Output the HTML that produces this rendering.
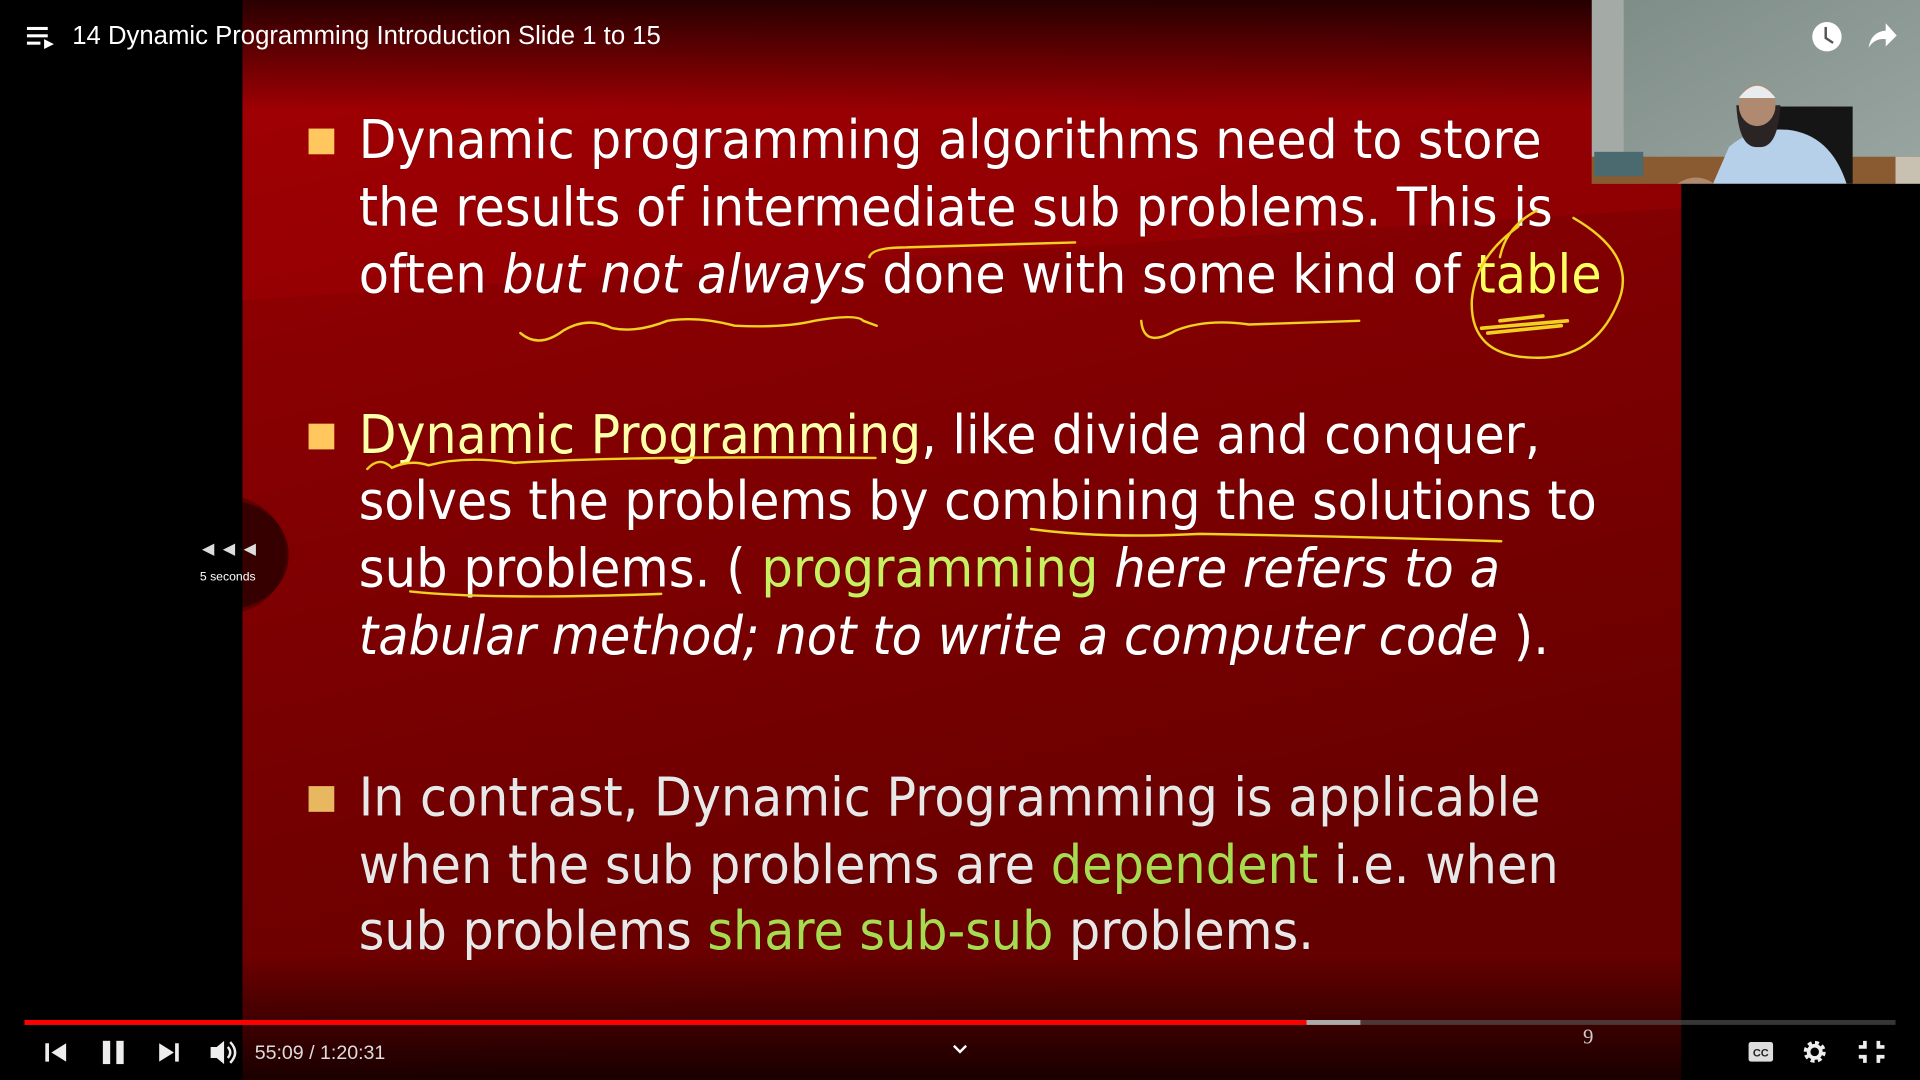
<!DOCTYPE html>
<html><head><meta charset="utf-8"><style>
html,body{margin:0;padding:0;background:#000;overflow:hidden}
svg{display:block}
text{font-family:"DejaVu Sans","Liberation Sans",sans-serif}
</style></head><body>
<svg width="1920" height="1080" viewBox="0 0 1568 882" preserveAspectRatio="none" xmlns="http://www.w3.org/2000/svg">
<defs>
<linearGradient id="slide" x1="0" y1="0" x2="0.3" y2="1">
<stop offset="0" stop-color="#a00004"/><stop offset="0.3" stop-color="#8a0002"/><stop offset="1" stop-color="#640000"/>
</linearGradient>
<linearGradient id="top" x1="0" y1="0" x2="0" y2="1">
<stop offset="0" stop-color="#000" stop-opacity="0.75"/><stop offset="1" stop-color="#000" stop-opacity="0"/>
</linearGradient>
<linearGradient id="bot" x1="0" y1="0" x2="0" y2="1">
<stop offset="0" stop-color="#000" stop-opacity="0"/><stop offset="1" stop-color="#000" stop-opacity="0.75"/>
</linearGradient>
<linearGradient id="wall" x1="0" y1="0" x2="1" y2="1">
<stop offset="0" stop-color="#7e8c88"/><stop offset="1" stop-color="#9aa6a2"/>
</linearGradient>
</defs>
<rect width="1568" height="882" fill="#000"/>
<rect x="198" y="0" width="1175" height="882" fill="url(#slide)"/>
<path d="M198 0 H1300 V150 L1373 150 V170 L198 245 Z" fill="#a80006" opacity="0.35"/>
<rect x="0" y="0" width="1568" height="90" fill="url(#top)"/>
<rect x="0" y="780" width="1568" height="102" fill="url(#bot)"/>
<!-- webcam -->
<rect x="1300" y="0" width="268" height="150" fill="url(#wall)"/>
<rect x="1300" y="0" width="26" height="128" fill="#a4aaa6"/>
<rect x="1300" y="128" width="268" height="22" fill="#8a5a30"/>
<rect x="1302" y="124" width="40" height="20" fill="#4a6a70"/>
<rect x="1548" y="128" width="20" height="22" fill="#c8c0b0"/>
<rect x="1437" y="87" width="76" height="63" fill="#151515"/>
<path d="M1399 150 L1412 120 Q1430 104 1460 106 Q1495 110 1508 150 Z" fill="#b6d0ea"/>
<path d="M1418 86 Q1420 122 1436 120 Q1452 122 1454 86 Z" fill="#2a2424"/>
<ellipse cx="1435" cy="86" rx="15" ry="17" fill="#b08a70"/>
<path d="M1420 80 Q1435 60 1450 80 Z" fill="#e8ecef"/>
<path d="M1370 150 Q1385 140 1400 150 Z" fill="#b08a70"/>
<!-- header -->
<g fill="#fff"><rect x="22" y="22" width="17" height="2.5"/><rect x="22" y="28" width="17" height="2.5"/><rect x="22" y="34" width="11" height="2.5"/><path d="M36 32 L44 36 L36 40 Z"/></g>
<text x="59" y="36" font-size="21" fill="#fff" style="font-family:'Liberation Sans',sans-serif">14 Dynamic Programming Introduction Slide 1 to 15</text>
<circle cx="1492" cy="30" r="12" fill="#fff"/><path d="M1491 22 V31 L1497 35" stroke="#555" stroke-width="2" fill="none"/>
<path d="M1526 39 Q1528 26 1540 25 V19 L1549 29 L1540 38 V32 Q1531 31 1526 39 Z" fill="#fff"/>
<!-- bullets -->
<g fill="#ffc75e"><rect x="252" y="105" width="21" height="21"/><rect x="252" y="346" width="21" height="21"/><rect x="252" y="642" width="21" height="21" fill="#e8b860"/></g>
<g font-size="44" fill="#fff" style="paint-order:stroke" stroke="#3a0000" stroke-opacity="0.35" stroke-width="1">
<text x="293" y="129" textLength="966" lengthAdjust="spacingAndGlyphs">Dynamic programming algorithms need to store</text>
<text x="293" y="184" textLength="975" lengthAdjust="spacingAndGlyphs">the results of intermediate sub problems. This is</text>
<text x="293" y="239" textLength="1015" lengthAdjust="spacingAndGlyphs">often <tspan font-style="italic">but not always</tspan> done with some kind of <tspan fill="#ffff60">table</tspan></text>
<text x="293" y="370" textLength="965" lengthAdjust="spacingAndGlyphs"><tspan fill="#ffffa8">Dynamic Programming</tspan>, like divide and conquer,</text>
<text x="293" y="424" textLength="1011" lengthAdjust="spacingAndGlyphs">solves the problems by combining the solutions to</text>
<text x="293" y="479" textLength="932" lengthAdjust="spacingAndGlyphs">sub problems. ( <tspan fill="#c8f060">programming</tspan> <tspan font-style="italic">here refers to a</tspan></text>
<text x="293" y="534" textLength="972" lengthAdjust="spacingAndGlyphs"><tspan font-style="italic">tabular method; not to write a computer code</tspan> ).</text>
<g fill="#e8e8e8">
<text x="293" y="666" textLength="965" lengthAdjust="spacingAndGlyphs">In contrast, Dynamic Programming is applicable</text>
<text x="293" y="721" textLength="980" lengthAdjust="spacingAndGlyphs">when the sub problems are <tspan fill="#a8dc50">dependent</tspan> i.e. when</text>
<text x="293" y="775" textLength="780" lengthAdjust="spacingAndGlyphs">sub problems <tspan fill="#a8dc50">share sub-sub</tspan> problems.</text>
</g></g>
<!-- annotations -->
<g fill="none" stroke="#f0d020" stroke-width="2" stroke-linecap="round">
<path d="M425 272 Q440 285 460 270 Q480 258 500 268 Q520 272 545 262 Q570 258 600 266 Q640 268 665 262 Q700 256 705 262 L716 266"/>
<path d="M710 210 Q712 202 740 202 L878 198"/>
<path d="M932 262 Q934 285 960 270 Q985 260 1020 265 L1110 262"/>
<path d="M1255 172 Q1230 185 1225 210 M1285 178 Q1340 210 1320 250 Q1300 295 1250 292 Q1200 290 1202 245 Q1205 210 1240 185"/>
<path d="M1210 268 L1280 262 M1215 272 L1275 266 M1225 262 L1260 258" stroke-width="3"/>
<path d="M300 383 Q310 372 320 382 Q335 375 350 380 Q380 372 420 378 Q520 372 715 374"/>
<path d="M842 432 Q900 440 980 436 Q1100 438 1226 442"/>
<path d="M335 483 Q400 490 540 485"/>
</g>
<!-- rewind indicator -->
<path d="M198 410 A48 44 0 0 1 198 496 Z" fill="#4a0000"/>
<circle cx="186" cy="453" r="48" fill="#000" opacity="0.25"/>
<g fill="#ddd"><path d="M175 444 L165 449 L175 454 Z"/><path d="M192 444 L182 449 L192 454 Z"/><path d="M209 444 L199 449 L209 454 Z"/></g>
<text x="186" y="474" font-size="10" fill="#fff" text-anchor="middle" style="font-family:'Liberation Sans',sans-serif">5 seconds</text>
<!-- progress -->
<rect x="20" y="833" width="1528" height="4" fill="#5a5a5a" opacity="0.6"/>
<rect x="1067" y="833" width="44" height="4" fill="#aaa"/>
<rect x="20" y="833" width="1047" height="4" fill="#f00"/>
<text x="1297" y="852" font-size="17" fill="#ccc" text-anchor="middle" style="font-family:'Liberation Serif',serif">9</text>
<g fill="#eee">
<rect x="37" y="852" width="3" height="15"/><path d="M54 852 L42 859.5 L54 867 Z"/>
<rect x="84" y="850" width="6" height="19"/><rect x="95" y="850" width="6" height="19"/>
<path d="M130 852 L142 859.5 L130 867 Z"/><rect x="143" y="852" width="3" height="15"/>
<path d="M172 855 H177 L183 850 V869 L177 864 H172 Z"/>
<path d="M186 855 Q190 859.5 186 864" stroke="#eee" stroke-width="2" fill="none"/>
<path d="M188 851 Q196 859.5 188 868" stroke="#eee" stroke-width="2" fill="none"/>
</g>
<text x="208" y="865" font-size="16" fill="#ddd" style="font-family:'Liberation Sans',sans-serif">55:09 / 1:20:31</text>
<path d="M779 854 L784 859 L789 854" stroke="#fff" stroke-width="2" fill="none"/>
<rect x="1428" y="851" width="20" height="16" rx="2" fill="#ddd"/>
<text x="1438" y="863" font-size="9" fill="#222" text-anchor="middle" font-weight="bold" style="font-family:'Liberation Sans',sans-serif">CC</text>
<circle cx="1482" cy="859" r="7" fill="none" stroke="#eee" stroke-width="4" stroke-dasharray="3 2.5"/>
<circle cx="1482" cy="859" r="5" fill="none" stroke="#eee" stroke-width="3"/>
<g stroke="#eee" stroke-width="3" fill="none"><path d="M1518 855 H1523 V850"/><path d="M1534 850 V855 H1539"/><path d="M1518 863 H1523 V868"/><path d="M1534 868 V863 H1539"/></g>
</svg>
</body></html>
